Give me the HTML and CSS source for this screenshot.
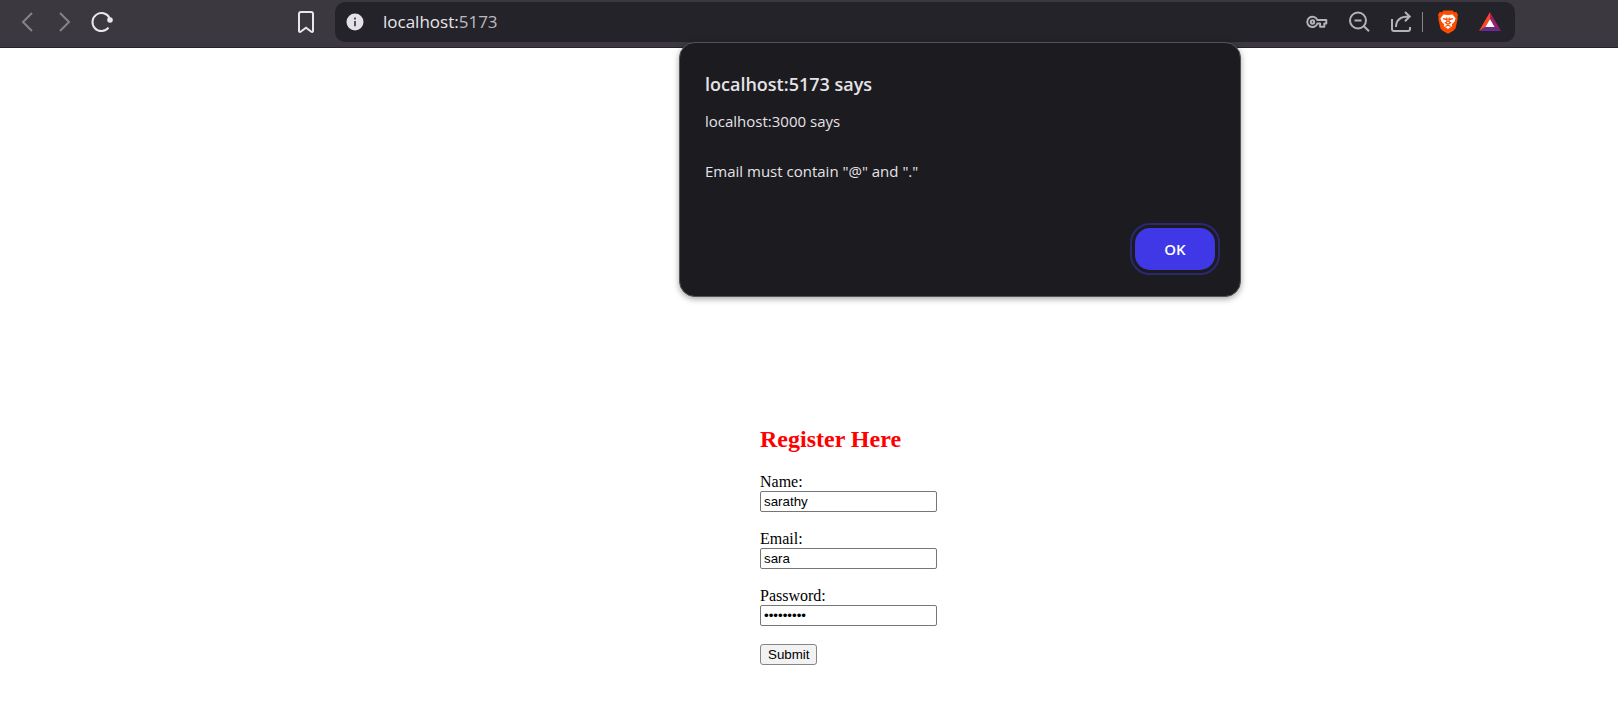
FILE: index.html
```html
<!DOCTYPE html>
<html lang="en">
<head>
<meta charset="utf-8">
<title>Register</title>
<link rel="stylesheet" href="styles.css">
</head>
<body>
<header class="toolbar">
  <nav class="nav">
    <button class="icon-btn dim" aria-label="Back"><svg width="20" height="24" viewBox="0 0 20 24"><path d="M14 3 5 12l9 9"/></svg></button>
    <button class="icon-btn dim" aria-label="Forward"><svg width="20" height="24" viewBox="0 0 20 24"><path d="M6 3l9 9-9 9"/></svg></button>
    <button class="icon-btn reload" aria-label="Reload"><svg width="24" height="24" viewBox="0 0 24 24"><path d="M18.500 17.700A9 9 0 1 1 19.500 8"/><circle cx="20" cy="10" r="2.800" fill="currentColor" stroke="none"/></svg></button>
  </nav>
  <button class="icon-btn bookmark" aria-label="Bookmark"><svg width="20" height="24" viewBox="0 0 20 24"><path d="M3 4a2 2 0 0 1 2-2h10a2 2 0 0 1 2 2V21a1 1 0 0 1-1.600.8L10 17.800l-5.400 4a1 1 0 0 1-1.600-.8z"/></svg></button>
  <div class="address">
    <button class="icon-btn info" aria-label="Site information"><svg width="18" height="18" viewBox="0 0 18 18"><circle cx="9" cy="9" r="8.500" fill="#e4e2e8" stroke="none"/><path d="M9 8v5.200M9 4.500v2" stroke="#55535a" stroke-width="2"/></svg></button>
    <span class="url">localhost:<span class="port">5173</span></span>
    <button class="icon-btn tool" aria-label="Passwords"><svg width="22" height="24" viewBox="0 0 22 24"><path d="M11.300 10h9v3.500h-2v3.200h-4.200v-3.200h-2.700A5.200 5.200 0 1 1 11.300 10z" stroke-linejoin="round"/><circle cx="6.500" cy="12" r="1.700"/></svg></button>
    <button class="icon-btn tool zoom" aria-label="Zoom out"><svg width="22" height="24" viewBox="0 0 22 24"><circle cx="10" cy="10.500" r="8"/><path d="M6.500 10.500h7M15.700 16l5.300 5.300"/></svg></button>
    <button class="icon-btn tool" aria-label="Share"><svg width="22" height="24" viewBox="0 0 22 24"><path d="M2 9v10a2 2 0 0 0 2 2h14a2 2 0 0 0 2-2v-2M6 17c0-6.500 4-10.500 13-10.500M15 2l4.700 4.500L15 11.200"/></svg></button>
    <span class="divider"></span>
    <button class="icon-btn brave" aria-label="Brave Shields"><svg width="22" height="24" viewBox="0 0 22 24"><path fill="#fc4c02" stroke="none" d="M6.500.5h9l1.700 1.800 2.200-.2L21 5l-.7 2 .4 2-2.200 9.500L16 21l-5 2.800L6 21l-2.500-2.500L1.300 9l.4-2L1 5l1.600-2.900 2.200.2z"/><path fill="#fff" stroke="none" d="M6.500 4.500l4.500.6 4.500-.6 3 3.700-.9 3.300-2.900 3 .6 1.500-4.300 3L6.700 16l.6-1.500-2.900-3-.9-3.300z"/><path fill="none" stroke="#fc4c02" stroke-width="1.300" d="M6 8.700l3.500.8M16 8.700l-3.500.8M9.800 7.500l.4 4-1.700 1.300 2.500 1.500 2.500-1.500-1.700-1.300.4-4M8.500 16.500l2.500-1.500 2.500 1.500"/></svg></button>
    <button class="icon-btn bat" aria-label="Rewards"><svg width="24" height="24" viewBox="0 0 24 24"><g stroke="none"><path fill="#ff4724" d="M12 2 1 21l6.500-4L12 9z"/><path fill="#9e1f63" d="M12 2l11 19-6.500-4L12 9z"/><path fill="#662d91" d="M1 21h22l-6.500-4h-9z"/><path fill="#fff" d="M12 9l4.600 8H7.400z"/></g></svg></button>
  </div>
</header>

<main class="page">
  <form class="register">
    <h2 class="heading">Register Here</h2>
    <label class="label" for="name">Name:</label>
    <input class="field" id="name" type="text" value="sarathy">
    <label class="label" for="email">Email:</label>
    <input class="field" id="email" type="text" value="sara">
    <label class="label" for="password">Password:</label>
    <input class="field" id="password" type="password" value="sarathy12">
    <button class="submit" type="submit">Submit</button>
  </form>
</main>

<section class="alert" role="alertdialog" aria-labelledby="alert-title">
  <h1 class="alert-title" id="alert-title">localhost:5173 says</h1>
  <p class="alert-text">localhost:3000 says</p>
  <p class="alert-text">Email must contain "@" and "."</p>
  <button class="ok">OK</button>
</section>
</body>
</html>
```
FILE: styles.css
```css
* {
  box-sizing: border-box;
}

body {
  margin: 0;
  background: #fff;
  color: #000;
  font-family: "Liberation Serif", "Times New Roman", serif;
  font-size: 16px;
}

.toolbar {
  display: flex;
  align-items: flex-start;
  height: 48px;
  padding: 2px 103px 0 18px;
  background: #3b393f;
  border-bottom: 1px solid #2b2230;
}

.nav {
  display: flex;
  flex: none;
  width: 278px;
  gap: 16px;
}

.icon-btn {
  display: flex;
  flex: none;
  align-items: center;
  height: 40px;
  padding: 0;
  border: 0;
  background: none;
  color: #e9e7ec;
}

.icon-btn svg {
  fill: none;
  stroke: currentColor;
  stroke-width: 2;
}

.icon-btn.dim {
  color: #858389;
}

.bookmark {
  margin-right: 19px;
}

.address {
  display: flex;
  flex: 1;
  align-items: center;
  height: 40px;
  padding: 0 13px 0 11px;
  border-radius: 10px;
  background: #242329;
}

.url {
  flex: 1;
  margin-left: 19px;
  color: #e9e7ec;
  font-family: "Segoe UI", "Open Sans", sans-serif;
  font-size: 17px;
  line-height: 38px;
}

.port {
  color: #bcbac0;
}

.icon-btn.tool {
  margin-right: 20px;
  color: #b5b3b9;
}

.divider {
  width: 1px;
  height: 20px;
  margin-left: -10px;
  background: #85838a;
}

.brave {
  margin: 0 19px 0 14px;
}

.page {
  padding: 377px 16px 56px calc(50% - 49px);
}

.register {
  display: flex;
  flex-direction: column;
  align-items: flex-start;
}

.heading {
  margin: 0 0 20px;
  color: #f00;
  font-size: 24px;
  line-height: 28px;
}

.label {
  line-height: 18px;
}

.field {
  width: 177px;
  height: 21px;
  margin: 0 0 18px;
  padding: 1px 3px;
  border: 1px solid #767676;
  border-radius: 2px;
  background: #fff;
  color: #000;
  font-family: "Liberation Sans", Arial, sans-serif;
}

.submit {
  height: 21px;
  padding: 0 7px;
  border: 1px solid #858585;
  border-radius: 3px;
  background: #f2f2f2;
  color: #000;
  font-family: "Liberation Sans", Arial, sans-serif;
}

.alert {
  position: absolute;
  top: 42px;
  left: calc(50% - 130px);
  display: flex;
  flex-direction: column;
  width: 562px;
  padding: 25px 25px 26px;
  border: 1px solid #55535a;
  border-radius: 16px;
  background: #1c1b1f;
  color: #e5e3e8;
  box-shadow: 0 2px 6px rgba(0, 0, 0, 0.35);
  font-family: "Segoe UI", "Open Sans", sans-serif;
}

.alert-title {
  margin: 0 0 9px;
  font-size: 18px;
  font-weight: 600;
  line-height: 32px;
}

.alert-text {
  margin: 0 0 25px;
  font-size: 15px;
  line-height: 25px;
}

.ok {
  align-self: flex-end;
  width: 80px;
  height: 42px;
  margin-top: 19px;
  border: 0;
  border-radius: 15px;
  outline: 2px solid #2a2870;
  outline-offset: 3px;
  background: #4038e6;
  color: #fff;
  font-family: "Segoe UI", "Open Sans", sans-serif;
  font-size: 15px;
  font-weight: 600;
}
```
